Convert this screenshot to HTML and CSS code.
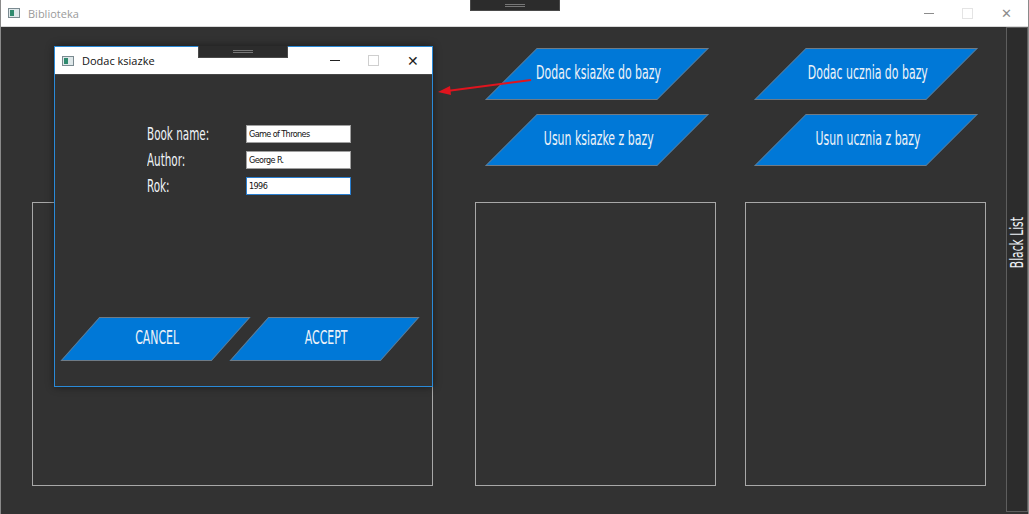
FILE: index.html
```html
<!DOCTYPE html>
<html lang="pl">
<head>
  <meta charset="UTF-8">
  <title>Biblioteka</title>
  <link rel="stylesheet" href="styles.css">
</head>
<body>
  <div class="window">
    <div class="titlebar">
      <span class="app-icon"><i></i></span>
      <span class="title">Biblioteka</span>
      <div class="controls">
        <span class="ctl ctl-min"></span>
        <span class="ctl ctl-max"></span>
        <span class="ctl ctl-close">&#x2715;</span>
      </div>
    </div>
    <div class="grip grip-main"><i></i></div>

    <div class="client">
      <div class="main">
        <div class="actions">
          <div class="btn-col">
            <div class="pbtn"><span>Dodac ksiazke do bazy</span></div>
            <div class="pbtn"><span>Usun ksiazke z bazy</span></div>
          </div>
          <div class="btn-col">
            <div class="pbtn"><span>Dodac ucznia do bazy</span></div>
            <div class="pbtn"><span>Usun ucznia z bazy</span></div>
          </div>
        </div>
        <div class="panels">
          <div class="panel panel-wide"></div>
          <div class="panel"></div>
          <div class="panel"></div>
        </div>
      </div>
      <div class="sidebar"><span>Black List</span></div>
    </div>

    <!-- okno dialogowe -->
    <div class="dialog">
      <div class="dlg-title">
        <span class="app-icon"><i></i></span>
        <span class="title">Dodac ksiazke</span>
        <div class="controls">
          <span class="ctl ctl-min"></span>
          <span class="ctl ctl-max"></span>
          <span class="ctl ctl-close">&#x2715;</span>
        </div>
      </div>
      <div class="grip grip-dlg"><i></i></div>
      <div class="dlg-body">
        <div class="form">
          <label for="book"><span>Book name:</span></label>
          <input id="book" type="text" value="Game of Thrones">
          <label for="author"><span>Author:</span></label>
          <input id="author" type="text" value="George R.">
          <label for="rok"><span>Rok:</span></label>
          <input id="rok" class="focused" type="text" value="1996">
        </div>
        <div class="dlg-buttons">
          <div class="dbtn"><span>CANCEL</span></div>
          <div class="dbtn"><span>ACCEPT</span></div>
        </div>
      </div>
    </div>

    <svg class="arrow" width="110" height="30" viewBox="0 0 110 30">
      <line x1="96" y1="5" x2="12" y2="16" stroke="#e0141e" stroke-width="2"/>
      <polygon points="3,17 15,11 16,20" fill="#e0141e"/>
    </svg>
  </div>
</body>
</html>
```

FILE: styles.css
```css
/* reset */
html, body {
  margin: 0;
  padding: 0;
}

body {
  background: #323232;
  overflow: hidden;
  font-family: "Open Sans", "Noto Sans", sans-serif;
}

.window {
  position: relative;
  width: 1029px;
  height: 514px;
  box-sizing: border-box;
  border-left: 1px solid #8a8a8a;
  border-right: 1px solid #8a8a8a;
  background: #323232;
}

/* pasek tytulu */
.titlebar {
  height: 26px;
  background: #fff;
  border-bottom: 1px solid #d8d8d8;
  display: flex;
  align-items: center;
  padding-left: 7px;
}

.app-icon {
  width: 12px;
  height: 10px;
  border: 1px solid #7a8a90;
  background: #dfe8ea;
  display: flex;
  align-items: stretch;
  padding: 1px;
  box-sizing: border-box;
}

.app-icon i {
  width: 4px;
  background: #2f8a6e;
}

.title {
  margin-left: 8px;
  font-size: 11px;
  color: #9a9a9a;
}

.controls {
  margin-left: auto;
  display: flex;
  height: 100%;
}

.ctl {
  width: 39px;
  height: 100%;
  display: flex;
  align-items: center;
  justify-content: center;
  position: relative;
  color: #8c8c8c;
  font-size: 13px;
}

.ctl-min::before {
  content: "";
  width: 10px;
  height: 1px;
  background: #8c8c8c;
}

.ctl-max::before {
  content: "";
  width: 9px;
  height: 9px;
  border: 1px solid #e4e4e4;
}

.titlebar .controls { margin-right: 2px; }

/* uchwyty u gory */
.grip {
  position: absolute;
  background: #2c2c2c;
  border: 1px solid #4a4a4a;
  border-top: none;
  display: flex;
  justify-content: center;
  align-items: center;
}

.grip i {
  width: 20px;
  height: 3px;
  border-top: 1px solid #777;
  border-bottom: 1px solid #777;
  box-sizing: border-box;
}

.grip-main {
  left: 469px;
  top: 0;
  width: 88px;
  height: 10px;
}

.grip-dlg {
  left: 143px;
  top: -1px;
  width: 88px;
  height: 11px;
}

/* obszar glowny */
.client {
  display: flex;
  height: 487px;
}

.main {
  flex: 1;
  padding: 21px 0 0 31px;
}

.actions {
  display: flex;
  gap: 45px;
  margin-left: 453px;
}

.btn-col {
  display: flex;
  flex-direction: column;
  gap: 14px;
  width: 224px;
}

.pbtn {
  width: 172px;
  height: 52px;
  margin-left: 26px;
  padding-bottom: 4px;
  box-sizing: border-box;
  background: #0078d7;
  border: 1px solid #6f7b86;
  transform: skewX(-45deg);
  display: flex;
  align-items: center;
  justify-content: center;
}

.pbtn span,
.dbtn span {
  transform: skewX(45deg) scaleX(0.64);
  color: #eef3f8;
  font-family: "DejaVu Sans Condensed", "DejaVu Sans", sans-serif;
  font-size: 19px;
  white-space: nowrap;
}

.panels {
  display: flex;
  margin-top: 36px;
}

.panel {
  width: 241px;
  height: 284px;
  box-sizing: border-box;
  border: 1px solid #a8a8a8;
  margin-left: 29px;
}

.panel-wide {
  width: 401px;
  margin-left: 0;
}

.panel-wide + .panel {
  margin-left: 42px;
}

.sidebar {
  width: 22px;
  height: 485px;
  box-sizing: border-box;
  border: 1px solid #5e5e5e;
  background: #2c2c2c;
  display: flex;
  justify-content: center;
}

.sidebar span {
  writing-mode: vertical-rl;
  transform: rotate(180deg) scaleY(0.7);
  margin-top: 179px;
  height: 72px;
  color: #eef2f6;
  font-family: "DejaVu Sans Condensed", "DejaVu Sans", sans-serif;
  font-size: 17px;
  line-height: 20px;
  white-space: nowrap;
}

/* okno dialogowe */
.dialog {
  position: absolute;
  left: 53px;
  top: 46px;
  width: 379px;
  height: 341px;
  box-sizing: border-box;
  border: 1px solid #2a8ad8;
  background: #323232;
  box-shadow: 0 0 8px rgba(0, 0, 0, 0.45);
}

.dlg-title {
  height: 27px;
  background: #fff;
  display: flex;
  align-items: center;
  padding-left: 7px;
}

.dlg-title .title {
  color: #111;
}

.dlg-title .ctl {
  color: #222;
  font-size: 14px;
}

.dlg-title .ctl-min::before { background: #222; }
.dlg-title .ctl-max::before { border-color: #cfcfcf; }

.dlg-body {
  height: 312px;
  border-top: 1px solid #474747;
  box-sizing: border-box;
}

.form {
  display: grid;
  grid-template-columns: 99px 105px;
  grid-auto-rows: 26px;
  align-items: center;
  margin: 46px 0 0 92px;
}

.form label {
  display: block;
}

.form label span {
  display: inline-block;
  color: #f0f4f8;
  font-family: "DejaVu Sans Condensed", "DejaVu Sans", sans-serif;
  font-size: 17px;
  transform: scaleX(0.68);
  transform-origin: left center;
  white-space: nowrap;
}

.form input {
  height: 18px;
  width: 105px;
  box-sizing: border-box;
  border: 1px solid #a0a0a0;
  padding: 0 2px;
  font-family: "DejaVu Sans Condensed", "DejaVu Sans", sans-serif;
  font-size: 9px;
  letter-spacing: -0.6px;
  color: #111;
  outline: none;
}

.form input.focused {
  border-color: #2a7fd0;
}

.dlg-buttons {
  display: flex;
  gap: 18px;
  margin: 118px 0 0 25px;
}

.dbtn {
  width: 151px;
  height: 44px;
  padding-bottom: 5px;
  box-sizing: border-box;
  background: #0078d7;
  border: 1px solid #6f7b86;
  transform: skewX(-41.6deg);
  display: flex;
  align-items: center;
  justify-content: center;
}

.dbtn span {
  transform: skewX(41.6deg) scaleX(0.64);
}

.arrow {
  position: absolute;
  left: 434px;
  top: 75px;
}
```
